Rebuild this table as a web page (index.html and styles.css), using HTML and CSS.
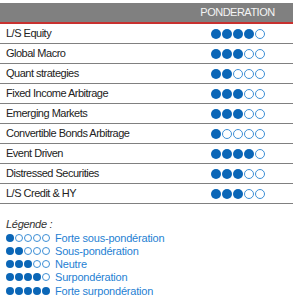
FILE: index.html
```html
<!DOCTYPE html>
<html>
<head>
<meta charset="utf-8">
<link rel="stylesheet" href="styles.css">
</head>
<body>
<div class="panel">
  <div class="head">
    <div class="c-name"></div>
    <div class="c-w">PONDERATION</div>
  </div>
  <div class="row"><div class="c-name">L/S Equity</div><div class="c-w"><span class="d f"></span><span class="d f"></span><span class="d f"></span><span class="d f"></span><span class="d e"></span></div></div>
  <div class="row"><div class="c-name">Global Macro</div><div class="c-w"><span class="d f"></span><span class="d f"></span><span class="d f"></span><span class="d e"></span><span class="d e"></span></div></div>
  <div class="row"><div class="c-name">Quant strategies</div><div class="c-w"><span class="d f"></span><span class="d f"></span><span class="d e"></span><span class="d e"></span><span class="d e"></span></div></div>
  <div class="row"><div class="c-name">Fixed Income Arbitrage</div><div class="c-w"><span class="d f"></span><span class="d f"></span><span class="d f"></span><span class="d e"></span><span class="d e"></span></div></div>
  <div class="row"><div class="c-name">Emerging Markets</div><div class="c-w"><span class="d f"></span><span class="d f"></span><span class="d f"></span><span class="d e"></span><span class="d e"></span></div></div>
  <div class="row"><div class="c-name">Convertible Bonds Arbitrage</div><div class="c-w"><span class="d f"></span><span class="d e"></span><span class="d e"></span><span class="d e"></span><span class="d e"></span></div></div>
  <div class="row"><div class="c-name">Event Driven</div><div class="c-w"><span class="d f"></span><span class="d f"></span><span class="d f"></span><span class="d f"></span><span class="d e"></span></div></div>
  <div class="row"><div class="c-name">Distressed Securities</div><div class="c-w"><span class="d f"></span><span class="d f"></span><span class="d f"></span><span class="d e"></span><span class="d e"></span></div></div>
  <div class="row"><div class="c-name">L/S Credit &amp; HY</div><div class="c-w"><span class="d f"></span><span class="d f"></span><span class="d f"></span><span class="d e"></span><span class="d e"></span></div></div>

  <div class="legend">
    <div class="lg-title">Légende :</div>
    <div class="lg-row"><span class="dots"><span class="s f"></span><span class="s e"></span><span class="s e"></span><span class="s e"></span><span class="s e"></span></span><span class="lg-text">Forte sous-pondération</span></div>
    <div class="lg-row"><span class="dots"><span class="s f"></span><span class="s f"></span><span class="s e"></span><span class="s e"></span><span class="s e"></span></span><span class="lg-text">Sous-pondération</span></div>
    <div class="lg-row"><span class="dots"><span class="s f"></span><span class="s f"></span><span class="s f"></span><span class="s e"></span><span class="s e"></span></span><span class="lg-text">Neutre</span></div>
    <div class="lg-row"><span class="dots"><span class="s f"></span><span class="s f"></span><span class="s f"></span><span class="s f"></span><span class="s e"></span></span><span class="lg-text">Surpondération</span></div>
    <div class="lg-row"><span class="dots"><span class="s f"></span><span class="s f"></span><span class="s f"></span><span class="s f"></span><span class="s f"></span></span><span class="lg-text">Forte surpondération</span></div>
  </div>
</div>
</body>
</html>
```

FILE: styles.css
```css
* { box-sizing: border-box; }
html, body { margin: 0; padding: 0; background: #ffffff; }
body {
  font-family: "Liberation Sans", Arial, sans-serif;
  font-size: 11px;
  color: #222222;
}
.panel {
  width: 293px;
  padding-top: 3px;
}
.head {
  display: flex;
  height: 21px;
  background: #808080;
  border-bottom: 2px solid #c8312f;
  color: #f4f4f4;
  letter-spacing: -0.5px;
  line-height: 19px;
}
.c-name {
  flex: 1;
  padding-left: 6px;
}
.c-w {
  width: 111px;
  display: flex;
  justify-content: center;
  align-items: center;
  gap: 1px;
}
.row {
  display: flex;
  height: 20px;
  border-bottom: 1px solid #808080;
  line-height: 19px;
  letter-spacing: -0.5px;
}
.d {
  width: 10px;
  height: 10px;
  border-radius: 50%;
  display: block;
}
.d.f { background: #0a66b7; }
.d.e { border: 1px solid #3d8fd6; background: #fff; }
.legend {
  padding-top: 13px;
  padding-left: 6px;
}
.lg-title {
  font-style: italic;
  color: #333333;
  line-height: 14px;
  letter-spacing: -0.3px;
}
.lg-row {
  display: flex;
  align-items: center;
  height: 13.25px;
}
.dots {
  display: flex;
  gap: 1px;
  width: 49px;
}
.s {
  width: 8px;
  height: 8px;
  border-radius: 50%;
  display: block;
}
.s.f { background: #0a66b7; }
.s.e { border: 1px solid #3d8fd6; background: #fff; }
.lg-text {
  color: #1f7fd3;
  letter-spacing: -0.2px;
}
```
